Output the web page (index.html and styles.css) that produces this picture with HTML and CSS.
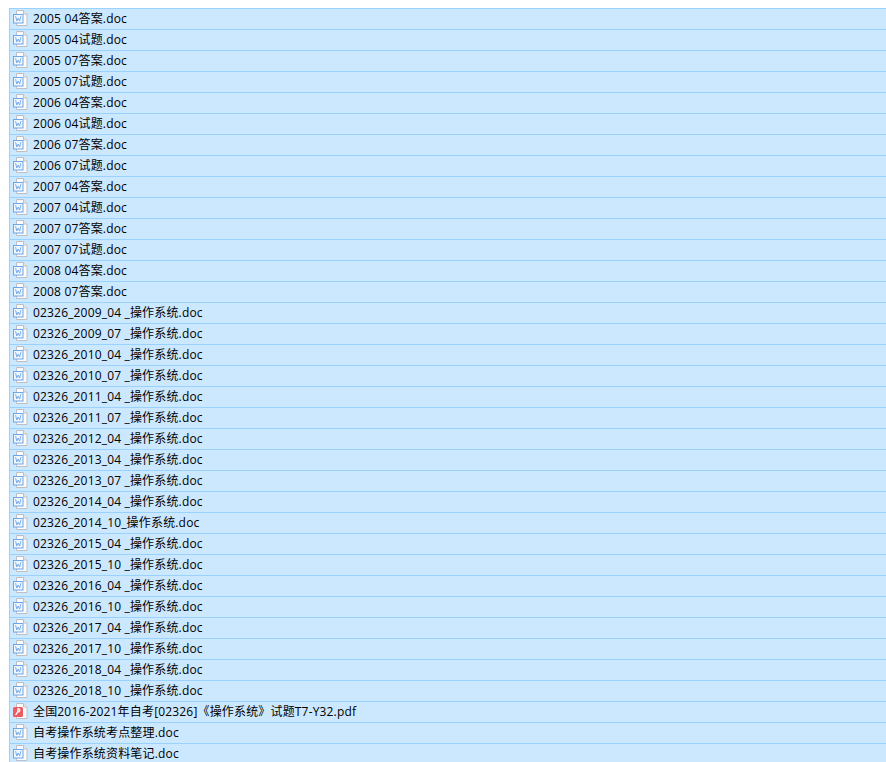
FILE: index.html
```html
<!DOCTYPE html>
<html lang="zh">
<head>
<meta charset="utf-8">
<title>文件列表</title>
<link rel="stylesheet" href="styles.css">
</head>
<body>
<svg class="defs" width="0" height="0" aria-hidden="true">
<symbol id="doc" viewBox="0 0 16 16">
<path d="M3.5.5H10.5L14 4V15.5H3.5Z" fill="#fbfbfc" stroke="#bcc0c6"/>
<path d="M10.5 .5V4H14" fill="#e8eaed" stroke="#bcc0c6"/>
<rect x=".5" y="4.5" width="9.5" height="8.5" fill="#f2f7fd" stroke="#6aa6ea"/>
<path d="M2.6 6.2L3.8 11L5.2 8L6.6 11L7.9 6.2" fill="none" stroke="#6aa6ea" stroke-width=".9"/>
</symbol>
<symbol id="pdf" viewBox="0 0 16 16">
<path d="M3.5.5H10.5L14 4V15.5H3.5Z" fill="#fbfbfc" stroke="#bcc0c6"/>
<path d="M10.5 .5V4H14" fill="#e8eaed" stroke="#bcc0c6"/>
<rect x="0" y="4" width="10" height="10" rx="1.5" fill="#ee5a60"/>
<path d="M2.5 12C4.5 10 5.5 8 5 5.5C7.5 5.5 8 9 3.5 9.5" fill="none" stroke="#fff" stroke-width="1.1"/>
</symbol>
</svg>
<main class="list">
<div class="row"><svg class="icon"><use href="#doc"/></svg><span>2005 04答案.doc</span></div>
<div class="row"><svg class="icon"><use href="#doc"/></svg><span>2005 04试题.doc</span></div>
<div class="row"><svg class="icon"><use href="#doc"/></svg><span>2005 07答案.doc</span></div>
<div class="row"><svg class="icon"><use href="#doc"/></svg><span>2005 07试题.doc</span></div>
<div class="row"><svg class="icon"><use href="#doc"/></svg><span>2006 04答案.doc</span></div>
<div class="row"><svg class="icon"><use href="#doc"/></svg><span>2006 04试题.doc</span></div>
<div class="row"><svg class="icon"><use href="#doc"/></svg><span>2006 07答案.doc</span></div>
<div class="row"><svg class="icon"><use href="#doc"/></svg><span>2006 07试题.doc</span></div>
<div class="row"><svg class="icon"><use href="#doc"/></svg><span>2007 04答案.doc</span></div>
<div class="row"><svg class="icon"><use href="#doc"/></svg><span>2007 04试题.doc</span></div>
<div class="row"><svg class="icon"><use href="#doc"/></svg><span>2007 07答案.doc</span></div>
<div class="row"><svg class="icon"><use href="#doc"/></svg><span>2007 07试题.doc</span></div>
<div class="row"><svg class="icon"><use href="#doc"/></svg><span>2008 04答案.doc</span></div>
<div class="row"><svg class="icon"><use href="#doc"/></svg><span>2008 07答案.doc</span></div>
<div class="row"><svg class="icon"><use href="#doc"/></svg><span>02326_2009_04 _操作系统.doc</span></div>
<div class="row"><svg class="icon"><use href="#doc"/></svg><span>02326_2009_07 _操作系统.doc</span></div>
<div class="row"><svg class="icon"><use href="#doc"/></svg><span>02326_2010_04 _操作系统.doc</span></div>
<div class="row"><svg class="icon"><use href="#doc"/></svg><span>02326_2010_07 _操作系统.doc</span></div>
<div class="row"><svg class="icon"><use href="#doc"/></svg><span>02326_2011_04 _操作系统.doc</span></div>
<div class="row"><svg class="icon"><use href="#doc"/></svg><span>02326_2011_07 _操作系统.doc</span></div>
<div class="row"><svg class="icon"><use href="#doc"/></svg><span>02326_2012_04 _操作系统.doc</span></div>
<div class="row"><svg class="icon"><use href="#doc"/></svg><span>02326_2013_04 _操作系统.doc</span></div>
<div class="row"><svg class="icon"><use href="#doc"/></svg><span>02326_2013_07 _操作系统.doc</span></div>
<div class="row"><svg class="icon"><use href="#doc"/></svg><span>02326_2014_04 _操作系统.doc</span></div>
<div class="row"><svg class="icon"><use href="#doc"/></svg><span>02326_2014_10_操作系统.doc</span></div>
<div class="row"><svg class="icon"><use href="#doc"/></svg><span>02326_2015_04 _操作系统.doc</span></div>
<div class="row"><svg class="icon"><use href="#doc"/></svg><span>02326_2015_10 _操作系统.doc</span></div>
<div class="row"><svg class="icon"><use href="#doc"/></svg><span>02326_2016_04 _操作系统.doc</span></div>
<div class="row"><svg class="icon"><use href="#doc"/></svg><span>02326_2016_10 _操作系统.doc</span></div>
<div class="row"><svg class="icon"><use href="#doc"/></svg><span>02326_2017_04 _操作系统.doc</span></div>
<div class="row"><svg class="icon"><use href="#doc"/></svg><span>02326_2017_10 _操作系统.doc</span></div>
<div class="row"><svg class="icon"><use href="#doc"/></svg><span>02326_2018_04 _操作系统.doc</span></div>
<div class="row"><svg class="icon"><use href="#doc"/></svg><span>02326_2018_10 _操作系统.doc</span></div>
<div class="row"><svg class="icon"><use href="#pdf"/></svg><span>全国2016-2021年自考[02326]《操作系统》试题T7-Y32.pdf</span></div>
<div class="row"><svg class="icon"><use href="#doc"/></svg><span>自考操作系统考点整理.doc</span></div>
<div class="row"><svg class="icon"><use href="#doc"/></svg><span>自考操作系统资料笔记.doc</span></div>
</main>
</body>
</html>
```

FILE: styles.css
```css
html, body {
  margin: 0;
  height: 762px;
  overflow: hidden;
  background: #fff;
}
.defs {
  display: block;
  height: 0;
}
.list {
  padding: 8px 0 0 9px;
  display: flex;
  flex-direction: column;
  font: 12px "Open Sans", "Noto Sans CJK SC", sans-serif;
  letter-spacing: 0.17px;
  color: #000;
}
.row {
  height: 18px;
  flex: none;
  display: flex;
  align-items: center;
  gap: 4px;
  padding: 0 0 2px 3px;
  background: #cce8ff;
  border-top: 1px solid #99d1ff;
  border-left: 1px solid #99d1ff;
  white-space: nowrap;
}
.icon {
  width: 16px;
  height: 16px;
  flex: none;
}
```
